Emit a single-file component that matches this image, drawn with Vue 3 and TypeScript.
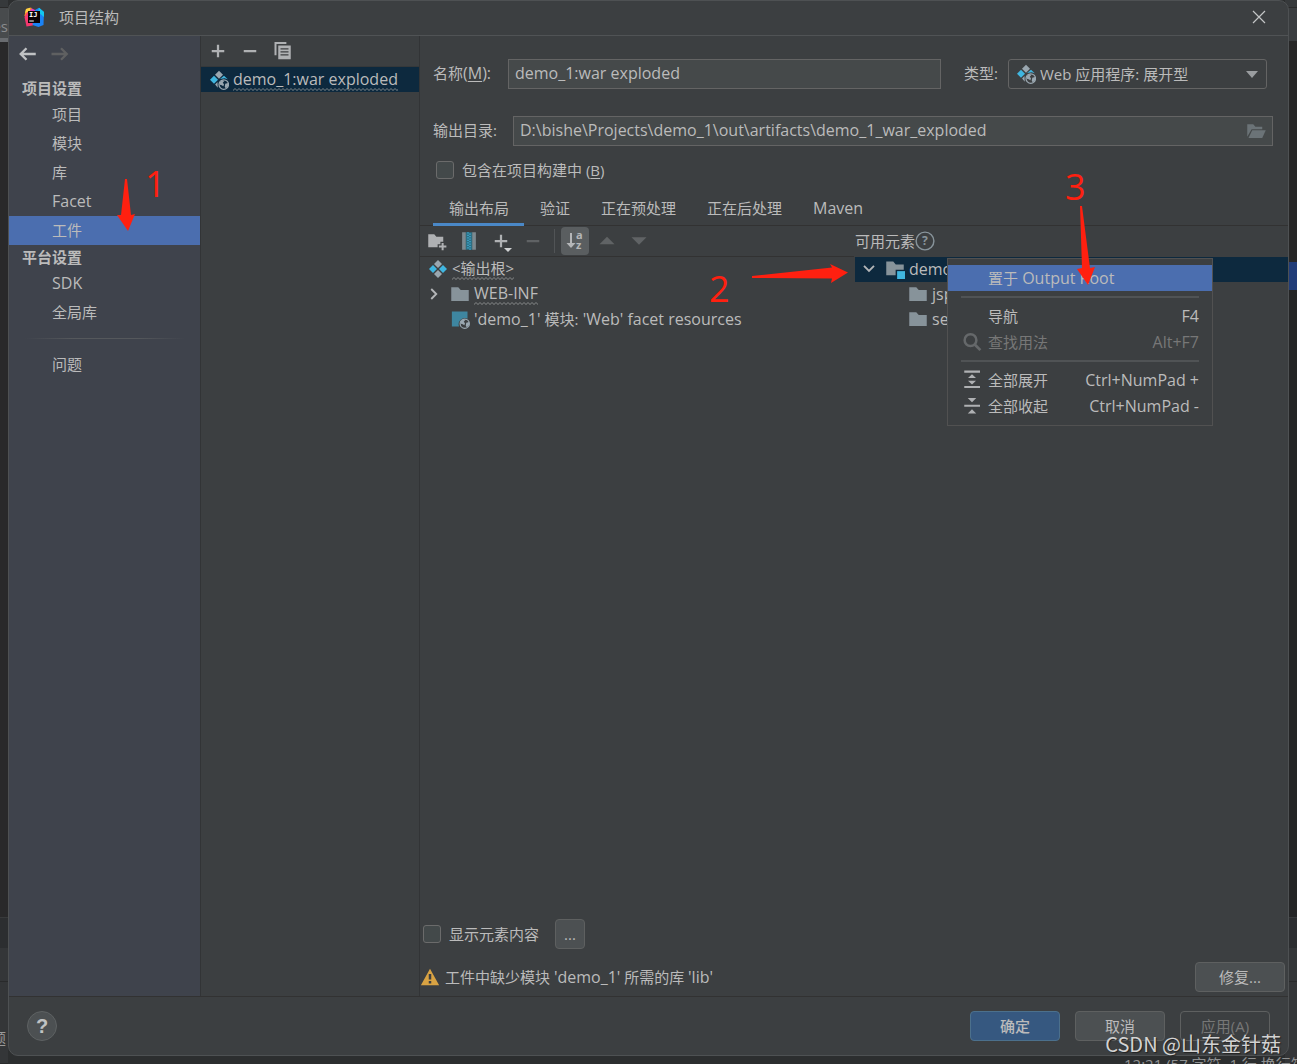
<script setup lang="ts">
import { ref } from 'vue'

interface MenuEntry {
  label?: string
  latin?: string
  shortcut?: string
  icon?: string
  active?: boolean
  disabled?: boolean
  separator?: boolean
}

const projectItems = ['项目', '模块', '库', 'Facet', '工件']
const platformItems = ['SDK', '全局库']
const selected = ref('工件')

const artifactName = ref('demo_1:war exploded')
const artifactType = ref('Web 应用程序: 展开型')
const outputDir = ref('D:\\bishe\\Projects\\demo_1\\out\\artifacts\\demo_1_war_exploded')
const includeInBuild = ref(false)
const showContent = ref(false)

const tabs = ['输出布局', '验证', '正在预处理', '正在后处理', 'Maven']
const activeTab = ref('输出布局')

const menu: MenuEntry[] = [
  { label: '置于', latin: ' Output Root', active: true },
  { separator: true },
  { label: '导航', shortcut: 'F4' },
  { label: '查找用法', shortcut: 'Alt+F7', icon: 'i-search', disabled: true },
  { separator: true },
  { label: '全部展开', shortcut: 'Ctrl+NumPad +', icon: 'i-expand' },
  { label: '全部收起', shortcut: 'Ctrl+NumPad -', icon: 'i-collapse' },
]

const isLatin = (text: string): boolean => /^[\x20-\x7e]+$/.test(text)
</script>

<template>
  <div class="screen">
    <svg class="sprite" aria-hidden="true">
      <symbol id="i-folder" viewBox="0 0 16 16">
        <path fill="#87939a" d="M1 2.500h5.600l2 2.300H15V13.500H1z" />
      </symbol>
      <symbol id="i-module" viewBox="0 0 16 16">
        <path fill="#87939a" d="M1 2h5.600l2 2.300H15V8.500H8.500V13H1z" />
        <path fill="#40b6e0" d="M9.700 9.700h6.300v6.300H9.700z" />
      </symbol>
      <symbol id="i-root" viewBox="0 0 16 16">
        <path fill="#9aa7b0" d="M8 .8l3.200 3.200L8 7.200 4.800 4zM8 8.800l3.200 3.200L8 15.200 4.800 12z" />
        <path fill="#40b6e0" d="M4 4.800l3.200 3.200L4 11.200.8 8zM12 4.800l3.200 3.200-3.200 3.200L8.800 8z" />
      </symbol>
      <symbol id="i-artifact" viewBox="0 0 16 16">
        <path fill="#9aa7b0" d="M8 .6l3.200 3.200L8 7 4.800 3.800zM6.800 9.500L4.900 11.600 7 14.200z" />
        <path fill="#40b6e0" d="M4 4.600l3.200 3.200L4 11 .8 7.800zM8.800 7.200l3.200-2.600 3 2.800-2.500-.9-2.500.4z" />
        <circle cx="11.800" cy="11.600" r="3.800" fill="none" stroke="#9aa7b0" stroke-width="1" />
        <path fill="#9aa7b0" d="M8.200 10.200l2.600-2.200 1.400.7-1.200 1.500 1 1.100-.5 1.600-1.300-.7-1.500-.4zM13 11l2.300-.6v2.400l-1.800 2-.9-1.400z" />
      </symbol>
      <symbol id="i-resources" viewBox="0 0 16 16">
        <path fill="#3e86a0" d="M1.500 2H14v5.800A5 5 0 0 0 7.200 14H1.500z" />
        <circle cx="11.800" cy="11.700" r="3.700" fill="none" stroke="#9aa7b0" stroke-width="1" />
        <path fill="#9aa7b0" d="M8.200 10.200l2.600-2.200 1.400.7-1.200 1.500 1 1.100-.5 1.600-1.300-.7-1.500-.4zM13 11l2.300-.6v2.400l-1.800 2-.9-1.400z" />
      </symbol>
      <symbol id="i-plus" viewBox="0 0 16 16">
        <path fill="#afb1b3" d="M7.100 3h1.800v4.100H13v1.800H8.900V13H7.100V8.900H3V7.100h4.100z" />
      </symbol>
      <symbol id="i-minus" viewBox="0 0 16 16">
        <path fill="currentColor" d="M3 7.100h10v1.800H3z" />
      </symbol>
      <symbol id="i-copy" viewBox="0 0 16 16">
        <path fill="#afb1b3" d="M2 .8h9.500v1.500H3.600v9H2z" />
        <path fill="#afb1b3" fill-rule="evenodd" d="M5 3.600h10v11H5zM6.800 5.800v1h6.400v-1zM6.800 8.200v1h6.400v-1zM6.800 10.600v1h6.400v-1z" />
      </symbol>
      <symbol id="i-back" viewBox="0 0 16 16">
        <path fill="none" stroke="currentColor" stroke-width="1.900" d="M15 8H3M7.600 3.400L3 8l4.600 4.600" />
      </symbol>
      <symbol id="i-forward" viewBox="0 0 16 16">
        <path fill="none" stroke="currentColor" stroke-width="1.900" d="M2 8h12M9.600 3.400L14.200 8l-4.600 4.600" />
      </symbol>
      <symbol id="i-newdir" viewBox="0 0 16 16">
        <path fill="#afb1b3" d="M1 2.500h4.800l1.700 2H13v4h-2.300v2H8.500V13H1z" />
        <path fill="#afb1b3" d="M11.700 9.500h1.600v2H15.500v1.600h-2.200v2.200h-1.600v-2.200H9.500v-1.600h2.200z" />
      </symbol>
      <symbol id="i-archive" viewBox="0 0 16 16">
        <path fill="#7d898f" d="M2.500 1h3v14h-3zM10.500 1h3v14h-3z" />
        <path fill="#2d6e83" d="M5.500 1h5v14h-5z" />
        <path fill="none" stroke="#40b6e0" stroke-width="1" stroke-dasharray="1 1" d="M7.200 1v14" />
        <path fill="none" stroke="#40b6e0" stroke-width="1" stroke-dasharray="1 1" d="M8.800 2v13" />
      </symbol>
      <symbol id="i-up" viewBox="0 0 16 16">
        <path fill="#606365" d="M8 4.500l6 6H2z" />
      </symbol>
      <symbol id="i-down" viewBox="0 0 16 16">
        <path fill="#606365" d="M8 11L2 5h12z" />
      </symbol>
      <symbol id="i-chevron-right" viewBox="0 0 16 16">
        <path fill="none" stroke="#b4b6b8" stroke-width="1.500" d="M5.800 4L9.800 8l-4 4" />
      </symbol>
      <symbol id="i-chevron-down" viewBox="0 0 16 16">
        <path fill="none" stroke="#b4b6b8" stroke-width="1.500" d="M4 5.500l4 4 4-4" />
      </symbol>
      <symbol id="i-search" viewBox="0 0 16 16">
        <circle cx="6.800" cy="6.500" r="4.700" fill="none" stroke="#65686a" stroke-width="2" />
        <path stroke="#65686a" stroke-width="2.200" d="M10.200 10l4.500 4.500" />
      </symbol>
      <symbol id="i-expand" viewBox="0 0 16 16">
        <path fill="#afb1b3" d="M1.800 .4h12.600v1.700H1.800zM1.800 12.700h12.600v1.700H1.800zM8 3.300l3.200 3H4.800zM8 11.500l3.200-3H4.800z" />
      </symbol>
      <symbol id="i-collapse" viewBox="0 0 16 16">
        <path fill="#afb1b3" d="M1.800 6.900h12.600v1.700H1.800zM8 4.900l3.400-3.400H4.600zM8 10.600l3.400 3.400H4.600z" />
      </symbol>
      <symbol id="i-open" viewBox="0 0 16 16">
        <path fill="#6b7377" d="M1 2.500h4.800l1.700 2H13v2H4.500L1 12.500z" />
        <path fill="#6b7377" d="M5 7.300h10.800L13 13.500H2z" />
      </symbol>
      <symbol id="i-warning" viewBox="0 0 16 16">
        <path fill="#d9a343" fill-rule="evenodd" d="M8 1.300L15.300 14.500H.7zM7 5.500v4.500h2V5.500zM7 11.200v2h2v-2z" />
      </symbol>
    </svg>

    <div class="backdrop" aria-hidden="true">
      <div class="edge left">
        <i class="strip cap"></i>
        <i class="strip tab-end">es</i>
        <i class="strip rule"></i>
        <i class="strip code"></i>
        <i class="strip tool"></i>
        <i class="strip pane"></i>
        <i class="strip pane status">题</i>
      </div>
      <div class="edge right">
        <i class="strip cap"></i>
        <i class="strip band"></i>
        <i class="strip gutter"></i>
        <i class="strip caret"></i>
        <i class="strip code"></i>
        <i class="strip tool"></i>
        <i class="strip pane"></i>
        <i class="strip pane status"></i>
      </div>
      <p class="statusbar">12:21 (57 字符, 1 行 换行符)</p>
    </div>

    <section class="dialog" role="dialog" aria-label="项目结构">
      <header class="titlebar">
        <svg class="logo" viewBox="0 0 20 20" aria-hidden="true">
          <path fill="#fd8a2f" d="M2 2L7 .5l4 5-7 8-3.500-5z" />
          <path fill="#f5386e" d="M.5 10l4-7 8 13-4 2.500-6 1z" />
          <path fill="#fcd344" d="M2 2L6 .8 6 4 1 6z" />
          <path fill="#e43dc0" d="M8 1.500l4 2-3 3-3-3z" />
          <path fill="#1b83f5" d="M11 3L15 .8l5 4.200-.5 13-5 2-6-2z" />
          <path fill="#14c8ee" d="M15 .8L20 5v5l-6-5z" />
          <path fill="#0a0306" d="M4 4h12v12H4z" />
          <path fill="#fff" d="M5.200 13.400h4.600v1H5.200z" />
          <text x="5" y="10" fill="#fff" class="logo-text">IJ</text>
        </svg>
        <h1>项目结构</h1>
        <button type="button" class="close" aria-label="关闭">
          <svg viewBox="0 0 14 14"><path fill="none" stroke="#c3c5c6" stroke-width="1.200" d="M1 1l12 12M13 1L1 13" /></svg>
        </button>
      </header>

      <div class="body">
        <nav class="sidebar">
          <div class="history">
            <button type="button" aria-label="后退"><svg class="icon"><use href="#i-back" /></svg></button>
            <button type="button" class="off" aria-label="前进"><svg class="icon"><use href="#i-forward" /></svg></button>
          </div>
          <h2>项目设置</h2>
          <button
            v-for="item in projectItems"
            :key="item"
            type="button"
            class="nav-item"
            :class="{ selected: selected === item, latin: isLatin(item) }"
            @click="selected = item"
          >{{ item }}</button>
          <h2>平台设置</h2>
          <button
            v-for="item in platformItems"
            :key="item"
            type="button"
            class="nav-item"
            :class="{ selected: selected === item, latin: isLatin(item) }"
            @click="selected = item"
          >{{ item }}</button>
          <hr />
          <button type="button" class="nav-item" :class="{ selected: selected === '问题' }" @click="selected = '问题'">问题</button>
        </nav>

        <aside class="artifacts">
          <div class="artifact-tools">
            <button type="button" aria-label="添加"><svg class="icon"><use href="#i-plus" /></svg></button>
            <button type="button" aria-label="移除"><svg class="icon"><use href="#i-minus" /></svg></button>
            <button type="button" aria-label="复制"><svg class="icon"><use href="#i-copy" /></svg></button>
          </div>
          <div class="artifact-row">
            <svg class="icon"><use href="#i-artifact" /></svg>
            <span class="wavy latin">demo_1:war exploded</span>
          </div>
        </aside>

        <main class="editor">
          <div class="form-row name-row">
            <label for="name" class="name-label">名称<span class="latin">(<u>M</u>):</span></label>
            <input id="name" v-model="artifactName" type="text" class="field latin" />
            <label for="type" class="type-label">类型:</label>
            <div class="combo">
              <svg class="icon"><use href="#i-artifact" /></svg>
              <select id="type" v-model="artifactType">
                <option>Web 应用程序: 展开型</option>
              </select>
              <svg class="arrow" viewBox="0 0 12 7"><path fill="#9a9da0" d="M0 0h12L6 7z" /></svg>
            </div>
          </div>
          <div class="form-row dir-row">
            <label for="dir" class="dir-label">输出目录:</label>
            <div class="field browse">
              <input id="dir" v-model="outputDir" type="text" class="latin" />
              <button type="button" aria-label="浏览"><svg class="icon"><use href="#i-open" /></svg></button>
            </div>
          </div>
          <label class="check build-check">
            <input v-model="includeInBuild" type="checkbox" />
            <span>包含在项目构建中 (<u>B</u>)</span>
          </label>

          <div class="tabs" role="tablist">
            <button
              v-for="tab in tabs"
              :key="tab"
              type="button"
              role="tab"
              class="tab"
              :class="{ active: tab === activeTab, latin: isLatin(tab) }"
              :aria-selected="tab === activeTab"
              @click="activeTab = tab"
            >{{ tab }}</button>
          </div>

          <div class="split">
            <div class="layout-pane">
              <div class="layout-tools">
                <button type="button" aria-label="创建目录"><svg class="icon"><use href="#i-newdir" /></svg></button>
                <button type="button" aria-label="创建归档"><svg class="icon"><use href="#i-archive" /></svg></button>
                <button type="button" class="add" aria-label="添加副本">
                  <svg class="icon"><use href="#i-plus" /></svg>
                  <svg class="drop" viewBox="0 0 8 4"><path fill="#d0d2d3" d="M0 0h8L4 4z" /></svg>
                </button>
                <button type="button" class="off" aria-label="移除元素"><svg class="icon"><use href="#i-minus" /></svg></button>
                <span class="divider"></span>
                <button type="button" class="pressed" aria-label="排序">
                  <svg class="icon" viewBox="0 0 20 20">
                    <path fill="none" stroke="#b4b6b8" stroke-width="2" d="M6 2v12" />
                    <path fill="#b4b6b8" d="M1.500 12h9L6 17z" />
                    <text x="11" y="8" fill="#b4b6b8" class="sort-text">a</text>
                    <text x="11" y="18" fill="#b4b6b8" class="sort-text">z</text>
                  </svg>
                </button>
                <button type="button" aria-label="上移"><svg class="icon"><use href="#i-up" /></svg></button>
                <button type="button" aria-label="下移"><svg class="icon"><use href="#i-down" /></svg></button>
              </div>
              <ul class="tree">
                <li><svg class="icon"><use href="#i-root" /></svg><span class="wavy">&lt;输出根&gt;</span></li>
                <li>
                  <svg class="icon chevron"><use href="#i-chevron-right" /></svg>
                  <svg class="icon"><use href="#i-folder" /></svg><span class="wavy latin">WEB-INF</span>
                </li>
                <li class="leaf">
                  <svg class="icon"><use href="#i-resources" /></svg>
                  <span class="latin">'demo_1' <span class="cjk">模块:</span> 'Web' facet resources</span>
                </li>
              </ul>
            </div>

            <div class="available-pane">
              <div class="available-head">
                <span>可用元素</span>
                <svg class="hint" viewBox="0 0 18 18" aria-hidden="true">
                  <circle cx="9" cy="9" r="8" fill="none" stroke="#87939a" stroke-width="1.300" />
                  <text x="9" y="13" text-anchor="middle" fill="#87939a" class="hint-text">?</text>
                </svg>
              </div>
              <ul class="tree">
                <li class="current">
                  <svg class="icon chevron"><use href="#i-chevron-down" /></svg>
                  <svg class="icon"><use href="#i-module" /></svg><span class="latin">demo_1</span>
                </li>
                <li class="child"><svg class="icon"><use href="#i-folder" /></svg><span class="latin">jsp-api</span></li>
                <li class="child"><svg class="icon"><use href="#i-folder" /></svg><span class="latin">servlet-api</span></li>
              </ul>
              <div class="menu" role="menu">
                <template v-for="(entry, index) in menu" :key="index">
                  <div v-if="entry.separator" class="menu-separator" role="separator"></div>
                  <button
                    v-else
                    type="button"
                    role="menuitem"
                    class="menu-item"
                    :class="{ active: entry.active }"
                    :disabled="entry.disabled"
                  >
                    <span class="menu-icon"><svg v-if="entry.icon" class="icon"><use :href="'#' + entry.icon" /></svg></span>
                    <span class="menu-label">{{ entry.label }}<span class="latin">{{ entry.latin }}</span></span>
                    <span class="latin">{{ entry.shortcut }}</span>
                  </button>
                </template>
              </div>
            </div>
          </div>

          <div class="content-row">
            <label class="check">
              <input v-model="showContent" type="checkbox" />
              <span>显示元素内容</span>
            </label>
            <button type="button" class="btn small">...</button>
          </div>
          <div class="problem-row">
            <svg class="icon"><use href="#i-warning" /></svg>
            <span class="problem">工件中缺少模块 <span class="latin">'demo_1'</span> 所需的库 <span class="latin">'lib'</span></span>
            <button type="button" class="btn">修复...</button>
          </div>
        </main>
      </div>

      <footer class="footer">
        <button type="button" class="help" aria-label="帮助">?</button>
        <button type="button" class="btn primary">确定</button>
        <button type="button" class="btn">取消</button>
        <button type="button" class="btn" disabled>应用(A)</button>
      </footer>
    </section>

    <div class="notes" aria-hidden="true">
      <span class="note one">1</span>
      <svg class="pointer p-one" viewBox="0 0 20 54"><path fill="#ff2010" d="M9 1h2l4 36 4-1-7 17L1 37h4z" /></svg>
      <span class="note two">2</span>
      <svg class="pointer p-two" viewBox="0 0 98 22"><path fill="#ff2010" d="M1 13l80-8.500L79 1l18 8.500L80 20l1-4.500L1 15z" /></svg>
      <span class="note three">3</span>
      <svg class="pointer p-three" viewBox="0 0 20 82"><path fill="#ff2010" d="M4 1h2l8 62 5-1-7 18L1 64l5-1z" /></svg>
      <span class="watermark">CSDN @山东金针菇</span>
    </div>
  </div>
</template>

<style>
body {
  margin: 0;
  background: #2b2b2b;
}
</style>

<style scoped>
.screen {
  position: relative;
  display: flex;
  box-sizing: border-box;
  min-height: 100vh;
  padding: 0 8px 8px;
  overflow: hidden;
  background: #2c2e2f;
  color: #bbbbbb;
  font: 15px/20px "Open Sans", "Noto Sans CJK SC", sans-serif;
}
.screen * {
  box-sizing: border-box;
}
.sprite {
  position: absolute;
  width: 0;
  height: 0;
}
button,
input,
select {
  margin: 0;
  padding: 0;
  border: 0;
  outline: 0;
  background: none;
  color: inherit;
  font: inherit;
}
.latin {
  font-size: 16px;
}
.cjk {
  font-size: 15px;
}
.icon {
  display: block;
  flex: none;
  width: 20px;
  height: 20px;
}
.off {
  color: #5f6264;
}

/* main window edges that stay visible around the dialog */
.backdrop {
  position: absolute;
  inset: 0;
  overflow: hidden;
}
.edge {
  position: absolute;
  top: 0;
  bottom: 0;
  width: 12px;
  display: flex;
  flex-direction: column;
}
.left { left: 0; }
.right { right: 0; }
.strip {
  display: flex;
  justify-content: flex-end;
  width: 8px;
  flex: none;
  font-style: normal;
}
.right .strip { width: 12px; }
.cap { height: 8px; background: #36393b; border-bottom: 1px solid #2a2a2a; }
.tab-end { height: 30px; padding-top: 8px; background: #484b4d; color: #8a8c8e; }
.rule { height: 4px; background: #696c70; }
.band { height: 33px; background: #3a3d3f; }
.gutter { height: 221px; background: #272727; }
.caret { height: 28px; background: #213d78; }
.strip.code { flex: 1; background: #29292a; }
.right .strip.code { background: #242526; }
.tool { height: 31px; background: #2c2e30; border-top: 1px solid #383a3b; }
.pane { height: 34px; background: #343638; border-bottom: 1px solid #292a2b; }
.status { height: 82px; padding: 46px 2px 0 0; color: #9a9a9a; }
.statusbar {
  position: absolute;
  right: 0;
  bottom: -10px;
  left: 0;
  margin: 0;
  padding-left: 1124px;
  overflow: hidden;
  color: #8f9192;
  white-space: nowrap;
}

.dialog {
  position: relative;
  display: flex;
  flex: 1;
  flex-direction: column;
  min-width: 0;
  overflow: hidden;
  border: 1px solid #4e5153;
  border-radius: 10px;
  background: #3c3f41;
}
.titlebar {
  display: flex;
  align-items: center;
  height: 35px;
  padding: 0 22px 2px 15px;
  border-bottom: 1px solid #505355;
}
.logo {
  width: 20px;
  height: 20px;
}
.logo-text {
  font: bold 7px "DejaVu Sans Mono", monospace;
}
h1 {
  flex: 1;
  margin: 0 0 0 15px;
  font-size: 15px;
  font-weight: 400;
}
.close svg {
  display: block;
  width: 14px;
  height: 14px;
}

.body {
  display: flex;
  flex: 1;
}
.sidebar {
  display: flex;
  flex: none;
  flex-direction: column;
  width: 192px;
  border-right: 1px solid #323436;
  background: #3f434c;
}
.history {
  display: flex;
  align-items: flex-start;
  gap: 12px;
  height: 40px;
  padding: 8px;
  color: #c0c2c4;
}
.history .off {
  color: #5f6061;
}
h2 {
  height: 24px;
  margin: 0;
  padding: 2px 13px;
  font-size: 15px;
  font-weight: 700;
  line-height: 20px;
}
.nav-item {
  height: 29px;
  padding: 0 0 2px 43px;
  text-align: left;
}
.selected {
  background: #4b6eaf;
}
hr {
  width: 160px;
  height: 1px;
  margin: 11px 0 11px 16px;
  border: 0;
  background: linear-gradient(to right, transparent, #55585c 30%, #55585c 70%, transparent);
}

.artifacts {
  flex: none;
  width: 219px;
  border-right: 1px solid #323436;
}
.artifact-tools {
  display: flex;
  gap: 12px;
  height: 31px;
  padding: 5px 7px;
  border-bottom: 1px solid #35383a;
  color: #afb1b3;
}
.artifact-row {
  display: flex;
  gap: 4px;
  align-items: center;
  height: 25px;
  padding-left: 8px;
  background: #0d293e;
}
.wavy {
  padding-bottom: 2px;
  background: url("data:image/svg+xml,%3Csvg xmlns='http://www.w3.org/2000/svg' width='4' height='3'%3E%3Cpath d='M-1 3.500L2 .5l3 3' fill='none' stroke='%23989a9c' stroke-width='.8'/%3E%3C/svg%3E") repeat-x left bottom;
}

.editor {
  display: flex;
  flex: 1;
  flex-direction: column;
  min-width: 0;
}
.form-row {
  display: flex;
  align-items: center;
  height: 30px;
  padding-left: 13px;
}
.form-row label {
  padding-bottom: 2px;
}
.name-row {
  margin-top: 23px;
  padding-right: 21px;
}
.dir-row {
  margin-top: 27px;
  padding-right: 15px;
}
.name-label { width: 75px; }
.type-label { width: 67px; padding-left: 23px; }
.dir-label { width: 80px; }
u {
  text-underline-offset: 2px;
}
.field {
  flex: 1;
  min-width: 0;
  height: 30px;
  padding: 0 6px 2px;
  border: 1px solid #646464;
  background: #45494a;
}
.browse {
  display: flex;
  align-items: center;
  padding-bottom: 0;
}
.browse input {
  flex: 1;
  min-width: 0;
  padding-bottom: 2px;
}
.combo {
  position: relative;
  display: flex;
  align-items: center;
  width: 259px;
  height: 30px;
  padding-left: 7px;
  border: 1px solid #646464;
  border-radius: 3px;
}
.combo select {
  flex: 1;
  height: 28px;
  padding-left: 4px;
  appearance: none;
}
.arrow {
  position: absolute;
  right: 8px;
  width: 12px;
  height: 7px;
  pointer-events: none;
}
.check {
  display: flex;
  gap: 8px;
  align-items: center;
  height: 24px;
}
.check input {
  width: 18px;
  height: 18px;
  border: 1px solid #6b6b6b;
  border-radius: 3px;
  background: #43494a;
  appearance: none;
}
.check input:checked {
  background: #4b6eaf;
}
.build-check {
  margin: 12px 0 0 16px;
}

.tabs {
  display: flex;
  margin-top: 11px;
  padding-left: 13px;
  box-shadow: inset 0 -1px #323232;
}
.tab {
  height: 33px;
  padding: 0 15px 4px 16px;
}
.active.tab {
  box-shadow: inset 0 -3px #4a88c7;
}

.split {
  display: flex;
  flex: 1;
}
.layout-pane {
  flex: 0 0 50%;
}
.layout-tools {
  display: flex;
  align-items: center;
  height: 31px;
  padding-left: 3px;
  border-bottom: 1px solid #323232;
}
.layout-tools button {
  display: grid;
  place-items: center;
  width: 28px;
  height: 28px;
  margin-right: 4px;
}
.layout-tools .add {
  position: relative;
}
.drop {
  position: absolute;
  right: 3px;
  bottom: 3px;
  width: 8px;
  height: 4px;
}
.divider {
  width: 1px;
  height: 24px;
  margin: 0 6px 0 3px;
  background: #515456;
}
.pressed {
  border-radius: 4px;
  background: #5a5e60;
}
.sort-text {
  font: bold 11px "Open Sans", sans-serif;
}
.tree {
  margin: 0;
  padding: 0;
  list-style: none;
}
.tree li {
  display: flex;
  gap: 4px;
  align-items: center;
  height: 25px;
  padding: 0 0 1px 8px;
}
.tree .leaf {
  padding-left: 30px;
}
.tree .chevron {
  margin: 0 2px 0 -4px;
}
.available-pane {
  position: relative;
  flex: 1;
  min-width: 0;
  margin-left: 1px;
}
.available-head {
  display: flex;
  align-items: center;
  height: 31px;
  padding-bottom: 2px;
}
.hint {
  width: 20px;
  height: 20px;
}
.hint-text {
  font: bold 11px "Open Sans", sans-serif;
}
.current {
  background: #0d293e;
}
.tree .child {
  padding-left: 53px;
}

.menu {
  position: absolute;
  top: 32px;
  left: 92px;
  width: 266px;
  padding: 6px 0;
  border: 1px solid #515151;
  background: #3c3f41;
}
.menu-item {
  display: flex;
  align-items: center;
  width: 100%;
  height: 26px;
  padding: 0 13px 0 14px;
}
.menu-item.active {
  background: #4b6eaf;
}
.menu-item:disabled {
  color: #777777;
}
.menu-icon {
  width: 26px;
}
.menu-label {
  flex: 1;
  text-align: left;
  white-space: pre;
}
.menu-separator {
  height: 2px;
  margin: 5px 13px;
  background: #505355;
}

.content-row,
.problem-row {
  display: flex;
  align-items: center;
  height: 30px;
  padding-left: 3px;
}
.content-row {
  gap: 16px;
}
.problem-row {
  gap: 5px;
  margin: 13px 3px 4px 0;
  padding-left: 0;
}
.problem {
  flex: 1;
}
.btn {
  width: 90px;
  height: 30px;
  border: 1px solid #5e6060;
  border-radius: 4px;
  background: #4c5052;
}
.btn.small {
  width: 30px;
}
.btn.primary {
  border-color: #4c708c;
  background: #365880;
  font-weight: 500;
}
.btn:disabled {
  background: none;
  color: #777777;
}
.footer {
  display: flex;
  gap: 15px;
  align-items: center;
  padding: 14px 18px;
  border-top: 1px solid #323232;
}
.help {
  width: 30px;
  height: 30px;
  margin-right: auto;
  border: 1px solid #5e6263;
  border-radius: 50%;
  background: #4c5052;
  color: #c0c2c3;
  font: bold 20px/28px "Liberation Sans", sans-serif;
}

/* hand-placed callouts over the dialog */
.notes {
  position: absolute;
  inset: 0;
  overflow: hidden;
  pointer-events: none;
}
.note {
  position: absolute;
  color: #ff2010;
  font: 36px/36px "Open Sans", sans-serif;
}
.one { top: 166px; left: 145px; }
.two { top: 271px; left: 709px; }
.three { top: 169px; left: 1065px; }
.pointer { position: absolute; }
.p-one { top: 178px; left: 116px; width: 20px; height: 54px; }
.p-two { top: 263px; left: 751px; width: 98px; height: 22px; }
.p-three { top: 205px; left: 1076px; width: 20px; height: 82px; }
.watermark {
  position: absolute;
  right: 16px;
  bottom: 8px;
  color: #d2d2d2;
  font: 20px/24px "Noto Sans CJK SC", sans-serif;
  text-shadow: 1px 1px 1px #222222;
}
</style>
